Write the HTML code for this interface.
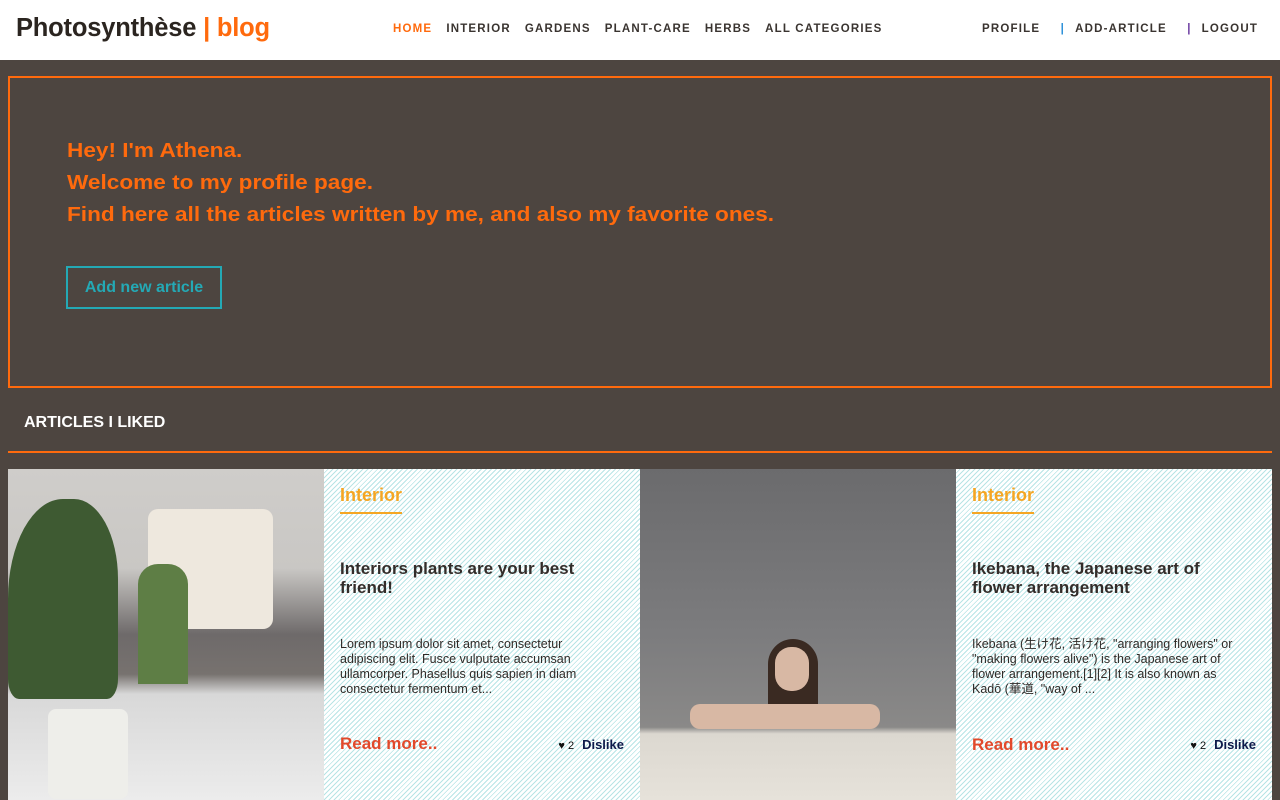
<!DOCTYPE html>
<html><head><meta charset="utf-8"><style>
*{margin:0;padding:0;box-sizing:border-box}
body{width:1280px;height:800px;overflow:hidden;background:#4d4540;font-family:"Liberation Sans",sans-serif}
.hdr{height:60px;background:#fff;position:relative}
.logo{position:absolute;left:16px;top:14px;font-size:25.5px;font-weight:bold;color:#2b2520;letter-spacing:-0.2px}
.logo span{color:#ff6a0d}
.nav{position:absolute;top:23px;font-size:11.5px;font-weight:bold;letter-spacing:1.2px;color:#3a3430}
.nav a{margin-right:14px}
.hero{position:absolute;left:8px;top:76px;width:1264px;height:312px;border:2px solid #ff6a0d}
.hero p{position:absolute;left:57px;font-size:20px;font-weight:bold;color:#ff6a0d;transform:scaleX(1.13);transform-origin:left}
.btn{position:absolute;left:56px;top:188px;width:156px;height:43px;border:2px solid #24a9b5;color:#24a9b5;font-size:16px;font-weight:bold;line-height:39px;text-align:center}
.sec{position:absolute;left:24px;top:414px;color:#fff;font-size:16px;font-weight:bold}
.line{position:absolute;left:8px;top:451px;width:1264px;height:2px;background:#ff6a0d}
.card{position:absolute;top:469px;width:316px;height:331px;background:#fff repeating-linear-gradient(135deg,#fff 0,#fff 2.5px,#b8e4e5 2.5px,#b8e4e5 3.5px)}
.cat{position:absolute;left:16px;top:16px;font-size:18px;font-weight:bold;color:#f5a623;padding-bottom:6px;border-bottom:2px solid #f5a623}
.tt{position:absolute;left:16px;top:90px;width:270px;font-size:17px;font-weight:bold;color:#332d2a;line-height:19px}
.tx{position:absolute;left:16px;top:168px;width:270px;font-size:12.5px;color:#2f2a27;line-height:15px}
.rm{position:absolute;left:16px;top:265px;font-size:17px;font-weight:bold;color:#e2492b}
.lk{position:absolute;right:16px;top:268px;font-size:13px;font-weight:bold;color:#0e1a4a}
.lk small{color:#111;font-weight:normal;font-size:11px;margin-right:8px}
.img{position:absolute;top:469px;width:316px;height:331px}
</style></head><body>
<div class="hdr">
<div class="logo">Photosynthèse <span>| blog</span></div>
<div class="nav" style="left:393px"><a style="color:#ff6a0d">HOME</a><a>INTERIOR</a><a>GARDENS</a><a>PLANT-CARE</a><a>HERBS</a><a>ALL CATEGORIES</a></div>
<div class="nav" style="left:982px">PROFILE <span style="color:#2a8fd8;margin:0 10px 0 16px">|</span>ADD-ARTICLE <span style="color:#6a3aa0;margin:0 10px 0 16px">|</span>LOGOUT</div>
</div>
<div class="hero">
<p style="top:62px">Hey! I'm Athena.</p>
<p style="top:94px">Welcome to my profile page.</p>
<p style="top:126px">Find here all the articles written by me, and also my favorite ones.</p>
<div class="btn">Add new article</div>
</div>
<div class="sec">ARTICLES I LIKED</div>
<div class="line"></div>
<div class="img" style="left:8px;background:linear-gradient(180deg,#cfcdca 0,#c9c7c4 30%,#6e6a6a 50%,#77726f 62%,#d8d8d8 68%,#ececec 100%)">
<div style="position:absolute;left:140px;top:40px;width:125px;height:120px;background:#eee8de;border-radius:10px"></div>
<div style="position:absolute;left:0;top:30px;width:110px;height:200px;background:#3e5a32;border-radius:50% 40% 10% 10%"></div>
<div style="position:absolute;left:130px;top:95px;width:50px;height:120px;background:#5e7e45;border-radius:20px 20px 0 0"></div>
<div style="position:absolute;left:40px;top:240px;width:80px;height:90px;background:#eeeeea;border-radius:8px"></div>
</div>
<div class="card" style="left:324px">
<div class="cat">Interior</div>
<div class="tt">Interiors plants are your best friend!</div>
<div class="tx">Lorem ipsum dolor sit amet, consectetur adipiscing elit. Fusce vulputate accumsan ullamcorper. Phasellus quis sapien in diam consectetur fermentum et...</div>
<div class="rm">Read more..</div>
<div class="lk"><small>♥ 2</small>Dislike</div>
</div>
<div class="img" style="left:640px;background:linear-gradient(180deg,#6b6b6d 0,#7c7c7e 50%,#8a8988 78%,#dcd8d0 80%,#e6e2da 100%)">
<div style="position:absolute;left:128px;top:170px;width:50px;height:70px;background:#3a2a22;border-radius:25px 25px 5px 5px"></div>
<div style="position:absolute;left:135px;top:178px;width:34px;height:44px;background:#d8b8a4;border-radius:16px"></div>
<div style="position:absolute;left:50px;top:235px;width:190px;height:25px;background:#d8b8a4;border-radius:10px"></div>
</div>
<div class="card" style="left:956px">
<div class="cat">Interior</div>
<div class="tt">Ikebana, the Japanese art of flower arrangement</div>
<div class="tx" style="font-family:'Liberation Sans','Noto Sans CJK JP',sans-serif">Ikebana (生け花, 活け花, "arranging flowers" or "making flowers alive") is the Japanese art of flower arrangement.[1][2] It is also known as Kadō (華道, "way of ...</div>
<div class="rm" style="top:266px">Read more..</div>
<div class="lk"><small>♥ 2</small>Dislike</div>
</div>
</body></html>
